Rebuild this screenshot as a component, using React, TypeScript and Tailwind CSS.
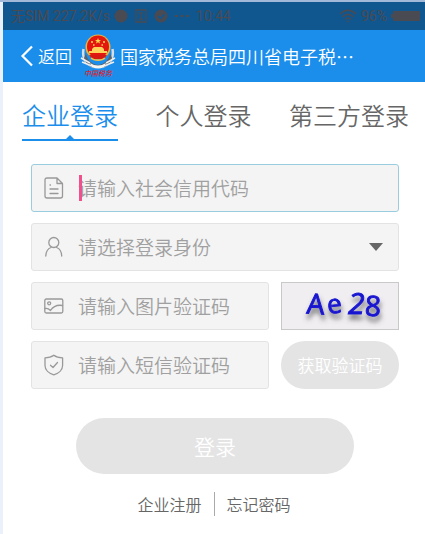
import {FC, ReactNode} from "react";

const iconProps = {
    fill: "none",
    stroke: "currentColor",
    strokeWidth: 1.3,
    strokeLinecap: "round",
    strokeLinejoin: "round",
} as const;

const DocIcon = () => (
    <svg viewBox="0 0 20 22" className="w-5 h-[22px] shrink-0" {...iconProps}>
        <path d="M13 1H3Q1 1 1 3V19Q1 21 3 21H16.500Q18.500 21 18.500 19V6.500L13 1V6.500H18.500"/>
        <path d="M6 8H6.500M6 12H14M6 16.500H14"/>
    </svg>
);

const UserIcon = () => (
    <svg viewBox="0 0 20 22" className="w-5 h-[22px] shrink-0" {...iconProps}>
        <circle cx="9.800" cy="6.500" r="5"/>
        <path d="M1.800 20C2 15.500 4 12.500 7 11.500M12.600 11.500C15.600 12.500 17.500 15.500 17.700 20"/>
    </svg>
);

const ImageIcon = () => (
    <svg viewBox="0 0 20 22" className="w-5 h-[22px] shrink-0" {...iconProps}>
        <rect x="0.800" y="4" width="18" height="14" rx="1.500"/>
        <circle cx="5.200" cy="8.300" r="1.500"/>
        <path d="M1 13.500C3 13 4.500 13.500 6.500 15.500C9.500 11 13 9.500 18.500 10.500"/>
    </svg>
);

const ShieldIcon = () => (
    <svg viewBox="0 0 20 22" className="w-5 h-[22px] shrink-0" {...iconProps}>
        <path d="M9.800 1.200C7.500 3 4.500 3.800 1 3.800V11.500C1 16 5 19.500 9.800 20.800C14.600 19.500 18.600 16 18.600 11.500V3.800C15 3.800 12 3 9.800 1.200Z"/>
        <path d="M6.500 11.200L9 13.500L13.500 8.500"/>
    </svg>
);

const TaxEmblem = () => (
    <svg viewBox="0 0 36 46" className="w-9 h-[46px] shrink-0">
        <path d="M3.500 16C2 24 5 31 14 34M32.500 16C34 24 31 31 22 34" fill="none" stroke="#d8dde0" strokeWidth="2.500"/>
        <path d="M6 20C7 27 11 31 18 32C25 31 29 27 30 20L32 25C30 32 25 35 18 35C11 35 6 32 4 25Z" fill="#59616a"/>
        <path d="M1 25L10 30M2 29L12 33M35 25L26 30M34 29L24 33" stroke="#eceff0" strokeWidth="1.500"/>
        <circle cx="18" cy="14" r="12.500" fill="#e9b53a"/>
        <circle cx="18" cy="13.500" r="11" fill="#e3170f"/>
        <path d="M18 5L18.800 7H21L19.300 8.300L20 10.500L18 9.200L16 10.500L16.700 8.300L15 7H17.200Z" fill="#ffd84a"/>
        <path d="M11 9H13M23 9H25M13 12H14.500M21.500 12H23" stroke="#ffd84a" strokeWidth="1.300"/>
        <path d="M12 16L14 14H22L24 16V18H27V20H9V18H12Z" fill="#ffd25a"/>
        <path d="M9 22H27L24 26H12Z" fill="#d61a12"/>
        <path d="M11 25C14 28 22 28 25 25" fill="none" stroke="#f1c04a" strokeWidth="1.500"/>
        <path d="M10 30Q18 35 26 30L24 34Q18 37 12 34Z" fill="#f3f4f4"/>
        <text x="18" y="43" textAnchor="middle" fontSize="7" fontWeight="500" fontStyle="italic" fill="#dc1f2b">中国税务</text>
    </svg>
);

const Captcha = () => (
    <svg viewBox="0 0 116 46" className="w-full h-full" role="img" aria-label="图片验证码">
        <defs>
            <filter id="shadow" x="-20%" y="-20%" width="140%" height="150%">
                <feDropShadow dx="1" dy="5" stdDeviation="2.500" floodColor="#555555" floodOpacity="0.800"/>
            </filter>
        </defs>
        <g fill="#1a14d0" stroke="#1a14d0" strokeWidth="1" fontFamily="'Open Sans', sans-serif" fontSize="28" filter="url(#shadow)">
            <text x="25" y="31" transform="rotate(4 34 20)">A</text>
            <text x="45" y="30" fontSize="26" transform="rotate(-6 53 22)">e</text>
            <text x="66" y="31" fontSize="30" fontStyle="italic">2</text>
            <text x="83" y="33" fontSize="28" transform="rotate(3 91 22)">8</text>
        </g>
    </svg>
);

const StatusBar = () => (
    <div className="h-7 bg-[#10568f] text-[#4a4b52] flex items-center pl-2 pr-1 text-[14px] leading-5">
        <span>无SIM 227.2K/s</span>
        <div className="flex items-center gap-[7px] ml-1">
            <svg viewBox="0 0 14 14" className="size-3.5" fill="currentColor">
                <circle cx="7" cy="7" r="6.500"/>
            </svg>
            <svg viewBox="0 0 12 14" className="w-3 h-3.5" fill="none" stroke="currentColor" strokeWidth="1.300">
                <path d="M1 1H11V13H1ZM4 4H8M6 5V10M4 10.500H8"/>
            </svg>
            <svg viewBox="0 0 14 14" className="size-3.5">
                <circle cx="7" cy="7" r="6.500" fill="currentColor"/>
                <path d="M4 7L6.500 9.500L10.500 5" fill="none" stroke="#10568f" strokeWidth="1.500"/>
            </svg>
            <svg viewBox="0 0 14 4" className="w-3.5 h-1" fill="currentColor">
                <path d="M0 1H3V3H0ZM5.500 1H8.500V3H5.500ZM11 1H14V3H11Z"/>
            </svg>
            <span>10:44</span>
        </div>
        <div className="flex items-center gap-1 ml-auto">
            <svg viewBox="0 0 18 14" className="w-[18px] h-3.5" fill="none" stroke="currentColor" strokeWidth="1.500">
                <path d="M1 5C6 0 12 0 17 5M3.500 8C7 4.500 11 4.500 14.500 8M6 10.500C8 8.500 10 8.500 12 10.500"/>
                <circle cx="9" cy="12.500" r="1" fill="currentColor" stroke="none"/>
            </svg>
            <span>96%</span>
            <svg viewBox="0 0 30 12" className="w-[30px] h-3" fill="currentColor">
                <path d="M0 4H2V1H29V11H2V8H0Z"/>
            </svg>
        </div>
    </div>
);

interface FieldProps {
    icon: ReactNode;
    focused?: boolean;
    children: ReactNode;
}

const Field: FC<FieldProps> = ({icon, focused, children}) => (
    <label
        className={`relative h-12 min-w-0 flex flex-1 items-center gap-3.5 pl-3 pr-3 border rounded-[3px] bg-[#f4f4f4] text-[#999999] ${focused ? "border-[#9accdf]" : "border-[#e3e3e3]"}`}
    >
        {icon}
        {children}
    </label>
);

const inputClass = "w-full min-w-0 bg-transparent outline-none text-[19px] leading-7 font-[350] text-[#a0a0a0] placeholder:text-[#a0a0a0]";

const tabs = ["企业登录", "个人登录", "第三方登录"];

export default function App() {
    return (
        <div className="min-h-screen bg-white border-t-2 border-t-[#a3b9da] font-['Noto_Sans_CJK_SC',sans-serif]">
            <div className="min-h-[532px] border-l-[3px] border-l-[#eaf1fa]">
                <div className="font-['Roboto','Noto_Sans_CJK_SC',sans-serif]">
                    <StatusBar/>
                </div>

                {/* Header */}
                <header className="h-[52px] bg-[#1b8eec] text-white flex items-center pl-[17px] pr-4">
                    <button type="button" className="flex items-center gap-1 text-[17px] leading-6 font-[350] whitespace-nowrap">
                        <svg viewBox="0 0 14 22" className="w-3.5 h-[22px]" fill="none" stroke="currentColor" strokeWidth="2.200">
                            <path d="M12 1.500L2.500 11L12 20.500"/>
                        </svg>
                        返回
                    </button>
                    <div className="flex items-center min-w-0 ml-2 gap-1">
                        <TaxEmblem/>
                        <h1 className="text-[18px] leading-6 font-[350] whitespace-nowrap">国家税务总局四川省电子税…</h1>
                    </div>
                </header>

                {/* Login type tabs */}
                <nav role="tablist" className="flex justify-between pl-[19px] pr-4 pt-4">
                    {tabs.map((tab, index) => (
                        <button
                            key={tab}
                            type="button"
                            role="tab"
                            aria-selected={index === 0}
                            className={`relative h-[43px] pb-2 text-[24px] leading-8 font-[350] whitespace-nowrap border-b-2 ${index === 0 ? "text-[#1b8eec] border-[#1b8eec]" : "text-[#666666] border-transparent"}`}
                        >
                            {tab}
                            {index === 0 && (
                                <svg viewBox="0 0 8 4" className="absolute bottom-0 left-1/2 -translate-x-1/2 w-2 h-1" fill="currentColor">
                                    <path d="M0 4L4 0L8 4Z"/>
                                </svg>
                            )}
                        </button>
                    ))}
                </nav>

                <form className="pl-7 pr-[26px] pt-[23px]" onSubmit={(e) => e.preventDefault()}>
                    <div className="flex flex-col gap-[11px]">
                        <div className="flex">
                            <Field icon={<DocIcon/>} focused>
                                <input type="text" aria-label="社会信用代码" placeholder="请输入社会信用代码" className={inputClass}/>
                                <span className="absolute left-[47px] top-2.5 w-[3px] h-[26px] bg-[#f0508c]"/>
                            </Field>
                        </div>
                        <div className="flex">
                            <Field icon={<UserIcon/>}>
                                <select aria-label="登录身份" className={`${inputClass} appearance-none`}>
                                    <option>请选择登录身份</option>
                                </select>
                                <svg viewBox="0 0 14 8" className="absolute right-[15px] top-[19px] w-3.5 h-2 pointer-events-none" fill="#666666">
                                    <path d="M0 0H14L7 8Z"/>
                                </svg>
                            </Field>
                        </div>
                        <div className="flex gap-3">
                            <Field icon={<ImageIcon/>}>
                                <input type="text" aria-label="图片验证码" placeholder="请输入图片验证码" className={inputClass}/>
                            </Field>
                            <div className="w-[118px] h-12 border border-[#c9c9c9] bg-[#f0eef1]">
                                <Captcha/>
                            </div>
                        </div>
                        <div className="flex gap-3">
                            <Field icon={<ShieldIcon/>}>
                                <input type="text" aria-label="短信验证码" placeholder="请输入短信验证码" className={inputClass}/>
                            </Field>
                            <button type="button" className="w-[118px] h-12 rounded-full bg-[#e4e4e4] text-white text-[17px] leading-6 font-[350]">
                                获取验证码
                            </button>
                        </div>
                    </div>
                    <div className="px-[45px] pt-[29px]">
                        <button type="submit" className="w-full h-14 rounded-full bg-[#e4e4e4] text-white text-[21px] leading-8 font-[350]">
                            登录
                        </button>
                    </div>
                </form>

                {/* Footer links */}
                <div className="flex justify-center items-center pt-[18px] text-[16px] leading-6 font-[350] text-[#666666]">
                    <a href="#register" className="pr-3 border-r border-[#aaaaaa]">企业注册</a>
                    <a href="#forgot" className="pl-3">忘记密码</a>
                </div>
            </div>
        </div>
    );
}
